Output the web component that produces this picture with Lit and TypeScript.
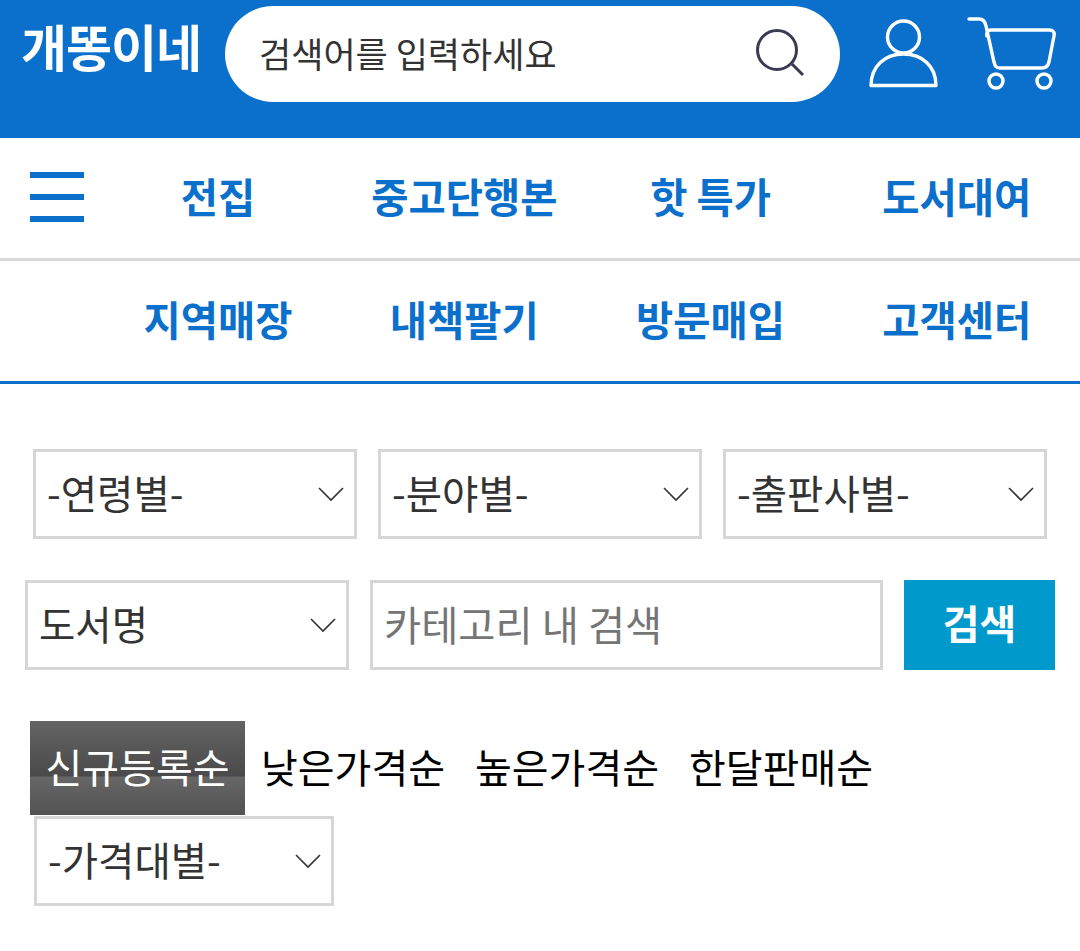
import { LitElement, html, css, svg } from "lit";
import { customElement } from "lit/decorators.js";

const chev = html`<svg class="chev" width="28" height="18" viewBox="0 0 28 18"><path d="M2 3 L14 15 L26 3" fill="none" stroke="#333" stroke-width="1.6"/></svg>`;

@customElement("app-root")
export class AppRoot extends LitElement {
  static styles = css`
    :host { display: block; width: 1080px; height: 951px; background: #fff; overflow: hidden;
      font-family: "Noto Sans CJK KR", "Noto Sans", sans-serif; }
    * { box-sizing: border-box; }
    .header { height: 138px; background: #0b70cc; display: flex; align-items: flex-start; padding: 6px 0 0 21px; }
    .logo { width: 204px; height: 86px; flex: none; color: #fff; font-size: 50px; font-weight: 700; line-height: 78px; letter-spacing: -1px; white-space: nowrap; }
    .search { width: 615px; height: 96px; flex: none; background: #fff; border-radius: 48px; display: flex; align-items: center; padding: 0 34px 0 34px; }
    .search input { flex: 1; min-width: 0; border: 0; outline: 0; background: none; font: inherit; font-size: 35px; color: #333; padding: 0; margin-top: -4px; }
    .search input::placeholder { color: #333; opacity: 1; }
    .nav { display: grid; grid-template-columns: repeat(4, 1fr); padding-left: 95px; position: relative; height: 120px; align-items: center; text-align: center;
      color: #0b70cc; font-size: 40.5px; font-weight: 700; }
    .nav span { line-height: 1; margin-top: -4px; }
    .nav.one { border-bottom: 3px solid #d9d9d9; height: 123px; }
    .nav.two { border-bottom: 3px solid #0b70cc; height: 123px; }
    .burger { position: absolute; left: 30px; top: 34px; width: 54px; height: 50px; display: flex; flex-direction: column; justify-content: space-between; }
    .burger i { display: block; height: 6px; background: #0b70cc; }
    .filters { padding-top: 65px; }
    .row { display: flex; gap: 21px; }
    .row.r1 { padding-left: 33px; margin-bottom: 41px; }
    .row.r2 { padding-left: 25px; margin-bottom: 51px; }
    .sel { width: 324px; height: 90px; flex: none; border: 3px solid #d6d6d6; display: flex; align-items: center; justify-content: space-between; padding: 0 9px 0 11px; font-size: 39.5px; color: #333; line-height: 1; }
    .sel span { margin-top: -4px; }
    .inp { width: 513px; height: 90px; flex: none; border: 3px solid #d6d6d6; padding: 0 12px 4px 11px; font: inherit; font-size: 40.4px; color: #333; outline: 0; }
    .inp::placeholder { color: #757575; opacity: 1; }
    .btn { width: 151px; height: 90px; flex: none; background: #0099cc; color: #fff; border: 0; font: inherit; font-size: 40px; font-weight: 700; padding: 0 0 6px; line-height: 1; }
    .sort { display: flex; align-items: center; padding-left: 30px; height: 94px; font-size: 40px; color: #000; }
    .sort span { padding: 0 14px 0 16px; white-space: nowrap; line-height: 1; margin-top: -5px; }
    .sort .on { width: 215px; height: 94px; flex: none; padding: 0 0 5px; margin: 0; display: flex; align-items: center; justify-content: center; color: #fff;
      background: linear-gradient(#646464 0%, #4a4a4a 58%, #666 60%, #525252 100%); }
    .price { margin: 1px 0 0 34px; width: 300px; }
  `;

  private sel(label: string, extra = "") {
    return html`<div class="sel ${extra}"><span>${label}</span>${chev}</div>`;
  }

  render() {
    return html`
      <div class="header">
        <div class="logo">개똥이네</div>
        <div class="search">
          <input placeholder="검색어를 입력하세요" />
          <svg width="50" height="50" viewBox="0 0 50 50"><circle cx="21" cy="21" r="19.5" fill="none" stroke="#3a3a55" stroke-width="3"/><path d="M36 35 L47 46" stroke="#3a3a55" stroke-width="3" fill="none"/></svg>
        </div>
        <svg class="u" width="70" height="72" viewBox="0 0 70 72" style="margin:13px 0 0 29px;flex:none"><circle cx="34.5" cy="18" r="16" fill="none" stroke="#fff" stroke-width="3.4"/><path d="M2 66.5 C2 47 16 35 34.5 35 C53 35 67 47 67 66.5 Z" fill="none" stroke="#fff" stroke-width="3.4" stroke-linejoin="round"/></svg>
        <svg class="c" width="92" height="76" viewBox="0 0 92 76" style="margin:10px 0 0 26px;flex:none">
          ${svg`<path d="M4 3 H14 C18 3 20 5 21 10 L29 46 C30 50 31 52 35 52 H77 C81 52 83 50 84 46 L89 20 C90 16 88 14 84 14 H26 C23 14 21 16 22 20" fill="none" stroke="#fff" stroke-width="3.4" stroke-linecap="round"/>
          <circle cx="31" cy="65" r="7" fill="none" stroke="#fff" stroke-width="3.4"/><circle cx="79" cy="65" r="7" fill="none" stroke="#fff" stroke-width="3.4"/>`}
        </svg>
      </div>
      <div class="nav one">
        <div class="burger"><i></i><i></i><i></i></div>
        <span>전집</span><span>중고단행본</span><span>핫 특가</span><span>도서대여</span>
      </div>
      <div class="nav two">
        <span>지역매장</span><span>내책팔기</span><span>방문매입</span><span>고객센터</span>
      </div>
      <div class="filters">
        <div class="row r1">${this.sel("-연령별-")}${this.sel("-분야별-")}${this.sel("-출판사별-")}</div>
        <div class="row r2">
          ${this.sel("도서명")}
          <input class="inp" placeholder="카테고리 내 검색" />
          <button class="btn">검색</button>
        </div>
        <div class="sort"><span class="on">신규등록순</span><span>낮은가격순</span><span>높은가격순</span><span>한달판매순</span></div>
        ${this.sel("-가격대별-", "price")}
      </div>
    `;
  }
}
